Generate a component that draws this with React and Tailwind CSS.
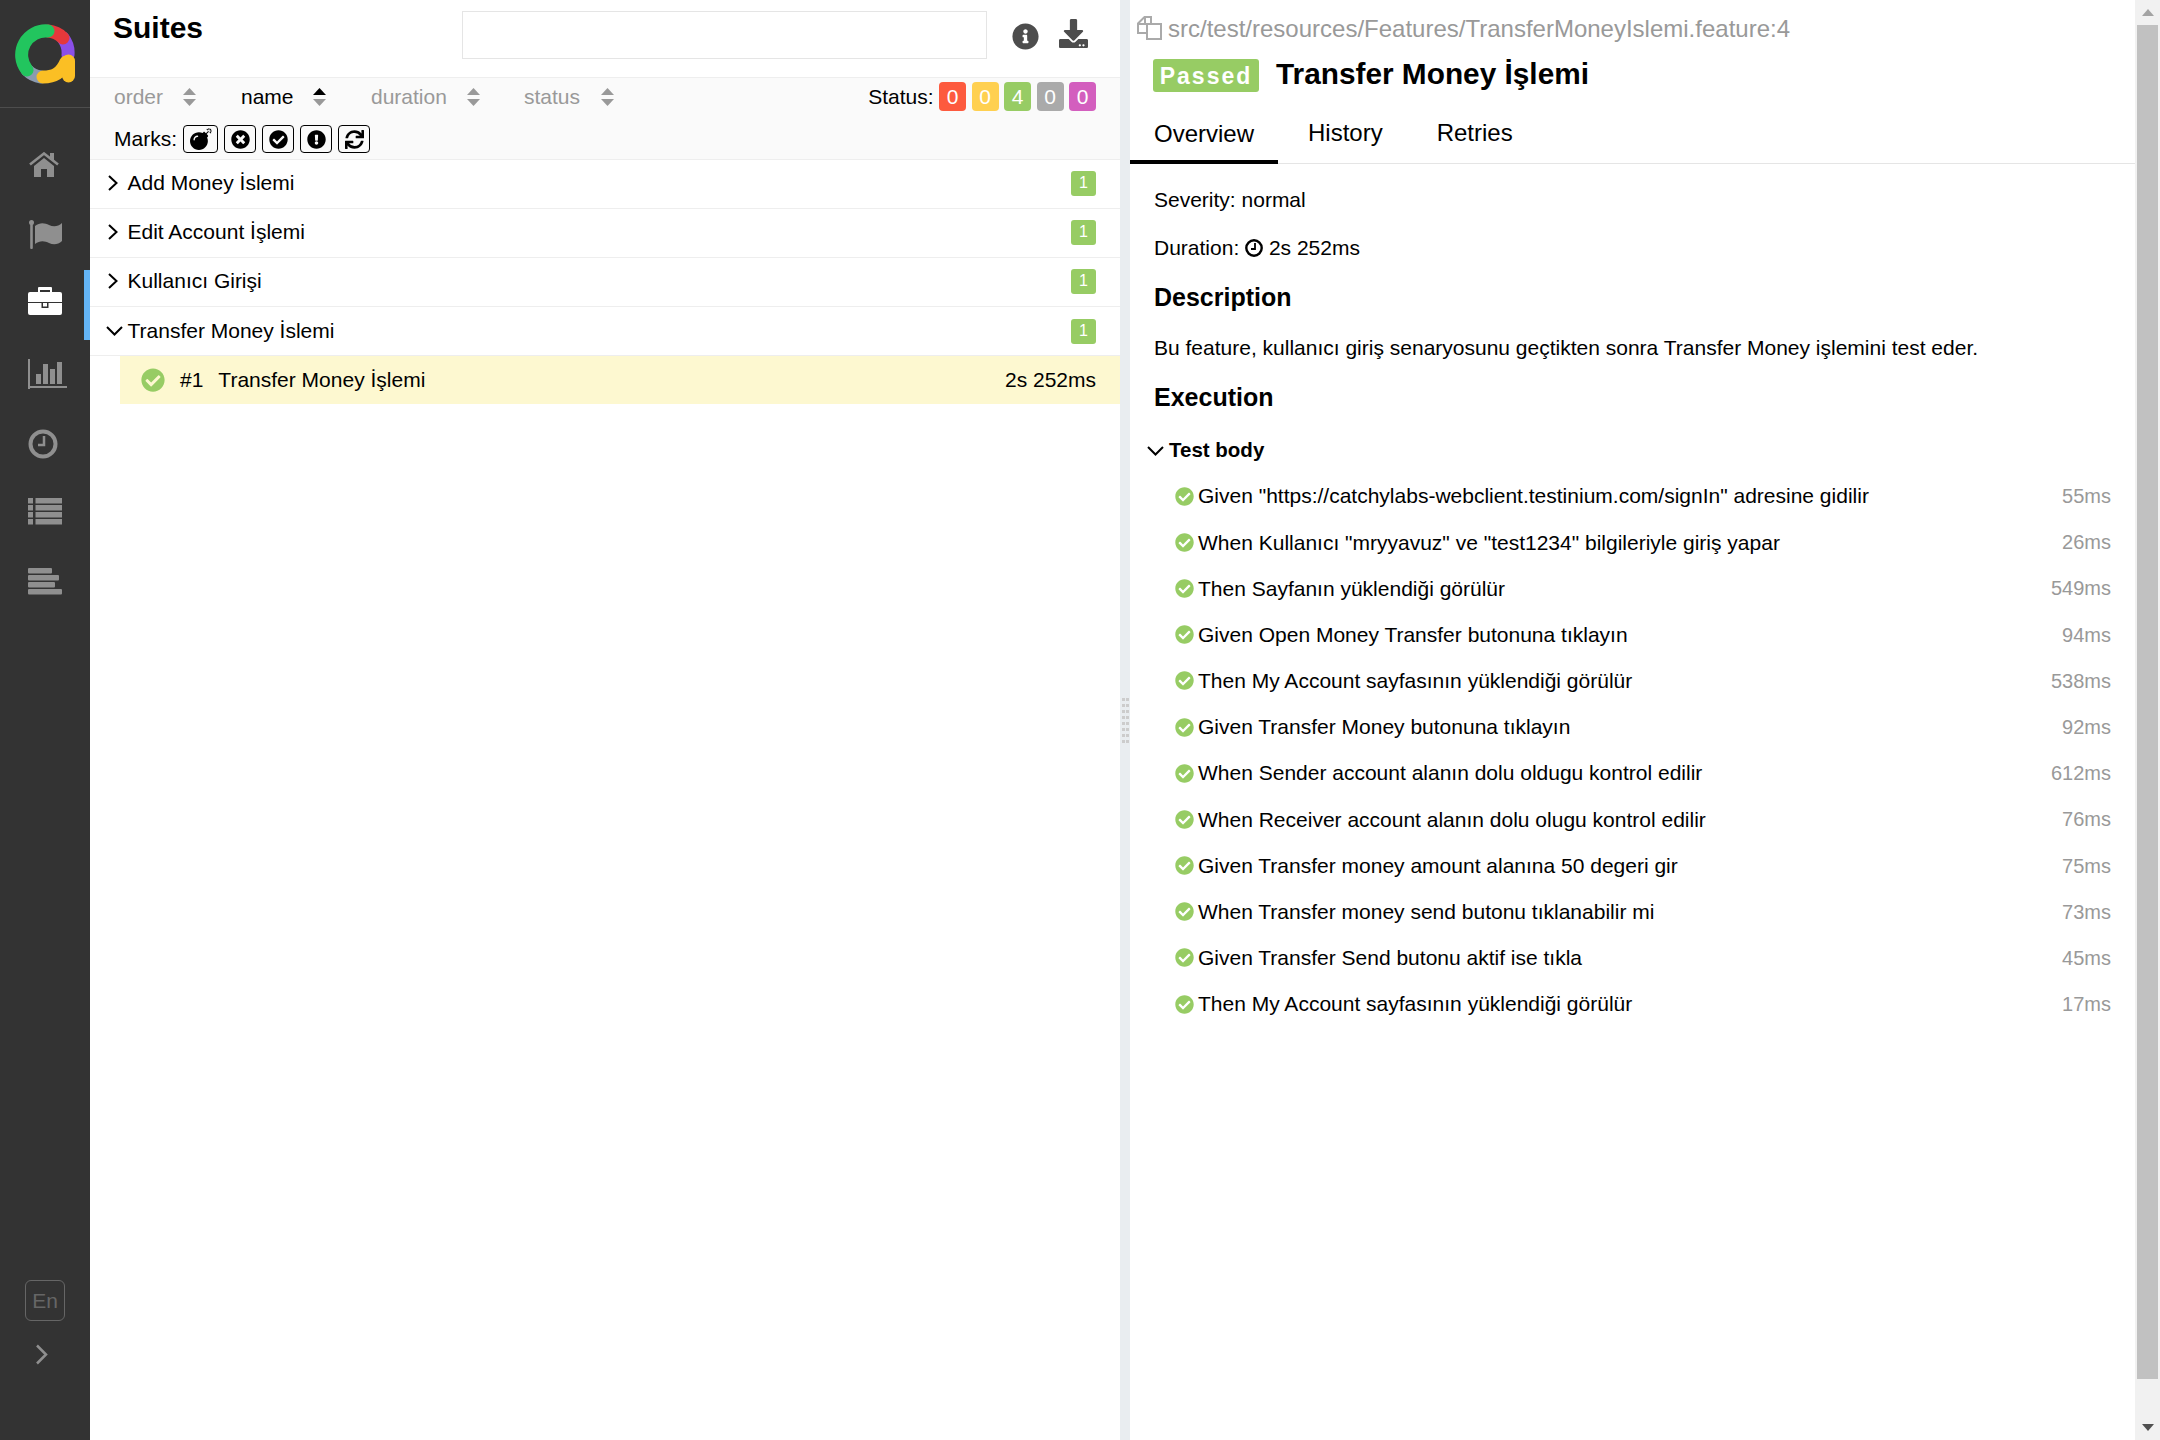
import React from "react";
import {
  FaBomb,
  FaTimesCircle,
  FaCheckCircle,
  FaExclamationCircle,
  FaSync,
  FaInfoCircle,
  FaDownload,
} from "react-icons/fa";

const suites = ["Add Money İslemi", "Edit Account İşlemi", "Kullanıcı Girişi"];

const steps = [
  ['Given "https://catchylabs-webclient.testinium.com/signIn" adresine gidilir', "55ms"],
  ['When Kullanıcı "mryyavuz" ve "test1234" bilgileriyle giriş yapar', "26ms"],
  ["Then Sayfanın yüklendiği görülür", "549ms"],
  ["Given Open Money Transfer butonuna tıklayın", "94ms"],
  ["Then My Account sayfasının yüklendiği görülür", "538ms"],
  ["Given Transfer Money butonuna tıklayın", "92ms"],
  ["When Sender account alanın dolu oldugu kontrol edilir", "612ms"],
  ["When Receiver account alanın dolu olugu kontrol edilir", "76ms"],
  ["Given Transfer money amount alanına 50 degeri gir", "75ms"],
  ["When Transfer money send butonu tıklanabilir mi", "73ms"],
  ["Given Transfer Send butonu aktif ise tıkla", "45ms"],
  ["Then My Account sayfasının yüklendiği görülür", "17ms"],
];

function Logo() {
  return (
    <svg width="60" height="60" viewBox="0 0 60 60" fill="none" strokeWidth="13" strokeLinecap="round">
      <path d="M12 46 A24 24 0 0 0 26 53" stroke="#8b9bb0" />
      <path d="M48 14 A24 24 0 0 1 53 31" stroke="#8b4fe8" />
      <path d="M33 7 A24 24 0 0 1 48 14" stroke="#e5383b" />
      <path d="M12 46 A24 24 0 0 1 33 7" stroke="#22c55e" />
      <path d="M28 53 C38 53 46 50 51 38" stroke="#fbbf24" />
      <path d="M53.5 37 V52" stroke="#fbbf24" />
    </svg>
  );
}

function HomeIcon() {
  return (
    <svg width="30" height="25" viewBox="0 0 30 25" fill="#8f8f8f" className="ml-[1px]">
      <rect x="21" y="1" width="4" height="7" />
      <path d="M1 12.5 L15 1.5 L29 12.5" fill="none" stroke="#8f8f8f" strokeWidth="2.6" />
      <path d="M5 14 L15 6 L25 14 V25 H18 V17 H12 V25 H5 Z" />
    </svg>
  );
}

function FlagIcon() {
  return (
    <svg width="33" height="29" viewBox="0 0 33 29" fill="#8f8f8f" className="ml-[1px]">
      <circle cx="2.5" cy="2.5" r="2.5" />
      <rect x="1.2" y="3" width="2.6" height="26" rx="1" />
      <path d="M6 6 C11 2 16 3 20 5 C24 7 29 7 33 3 V21 C29 25 24 25 20 23 C16 21 11 20 6 24 Z" />
    </svg>
  );
}

function BriefcaseIcon() {
  return (
    <svg width="34" height="28" viewBox="0 0 34 28">
      <path fillRule="evenodd" d="M11 0 H23 a1 1 0 0 1 1 1 V6 H22 V3 H12 V6 H10 V1 a1 1 0 0 1 1 -1 Z" fill="#fff" />
      <rect x="0" y="5" width="34" height="23" rx="2" fill="#fff" />
      <rect x="0" y="15" width="34" height="1" fill="#333" />
      <rect x="13.5" y="15" width="7" height="6" fill="#333" />
      <rect x="15" y="16" width="4" height="3.5" fill="#fff" />
    </svg>
  );
}

function ChartIcon() {
  return (
    <svg width="39" height="30" viewBox="0 0 39 30" fill="#8f8f8f">
      <rect x="0" y="0" width="2" height="30" />
      <rect x="0" y="27" width="39" height="2" />
      <rect x="8" y="15" width="5" height="10" />
      <rect x="15" y="5" width="5" height="20" />
      <rect x="22" y="10" width="5" height="15" />
      <rect x="29" y="3" width="5" height="22" />
    </svg>
  );
}

function ClockIcon() {
  return (
    <svg width="30" height="30" viewBox="0 0 30 30" fill="none" stroke="#8f8f8f">
      <circle cx="15" cy="15" r="12.5" strokeWidth="4" />
      <path d="M16 7 V16 H10" strokeWidth="2.5" />
    </svg>
  );
}

function ListIcon() {
  return (
    <svg width="34" height="27" viewBox="0 0 34 27" fill="#8f8f8f">
      {[0, 7, 14, 21].map((y) => (
        <g key={y}>
          <rect x="0" y={y} width="5" height="5.5" />
          <rect x="7.5" y={y} width="26.5" height="5.5" />
        </g>
      ))}
    </svg>
  );
}

function AlignIcon() {
  return (
    <svg width="34" height="27" viewBox="0 0 34 27" fill="#8f8f8f">
      <rect x="0" y="0" width="24" height="5.5" rx="1" />
      <rect x="0" y="7" width="31" height="5.5" rx="1" />
      <rect x="0" y="14" width="27" height="5.5" rx="1" />
      <rect x="0" y="21" width="34" height="5.5" rx="1" />
    </svg>
  );
}

function CopyIcon() {
  return (
    <svg width="25" height="24" viewBox="0 0 25 24" fill="none" stroke="#aaa" strokeWidth="2" className="mr-[6px] -mt-[2px]">
      <path d="M9 17 H1 V7.5 L7.5 1 H14 V7" />
      <path d="M8 1.5 V8 H1.5" />
      <path d="M10 8 H24 V23 H10 Z" />
    </svg>
  );
}

function SmallClock() {
  return (
    <svg width="18" height="18" viewBox="0 0 18 18" fill="none" stroke="#000">
      <circle cx="9" cy="9" r="7.7" strokeWidth="2.4" />
      <path d="M10 4 V10 H6" strokeWidth="1.8" />
    </svg>
  );
}

function NavItem({ active, pb, children }) {
  return (
    <div className={`h-[70px] flex items-center pl-[28px] border-r-[6px] ${pb} ${active ? "border-[#64b5f6]" : "border-transparent"}`}>
      {children}
    </div>
  );
}

function Sort({ active }) {
  return (
    <svg width="13" height="18" viewBox="0 0 13 18" className="shrink-0">
      <path d="M6.5 0 L13 7 H0 Z" fill={active ? "#000" : "#999"} />
      <path d="M0 11 H13 L6.5 18 Z" fill="#999" />
    </svg>
  );
}

function Chevron({ open, size = 2 }) {
  return open ? (
    <svg width="17" height="10" viewBox="0 0 17 10" fill="none" stroke="#000" strokeWidth={size}>
      <path d="M1 1 L8.5 8.5 L16 1" />
    </svg>
  ) : (
    <svg width="10" height="16" viewBox="0 0 10 16" fill="none" stroke="#000" strokeWidth={size}>
      <path d="M1 1 L8.5 8 L1 15" />
    </svg>
  );
}

function CountBadge() {
  return (
    <span className="w-[25px] h-[25px] rounded-[3px] bg-[#97cc64] text-white text-[16px] flex items-center justify-center">1</span>
  );
}

function StatusBadge({ color, value }) {
  return (
    <span className={`w-[27px] h-[29px] rounded-[4px] text-white text-[21px] flex items-center justify-center ${color}`}>{value}</span>
  );
}

function Mark({ w, size = 19, children }) {
  return (
    <span className={`h-[28px] border border-black rounded-[4px] flex items-center justify-center ${w} ${size === 22 ? "text-[22px]" : "text-[19px]"}`}>{children}</span>
  );
}

export default function App() {
  return (
    <div className="flex h-[1440px] overflow-hidden bg-white text-black text-[21px] font-['Liberation_Sans',Arial,sans-serif]">
      {/* side nav */}
      <aside className="w-[90px] shrink-0 bg-[#333] flex flex-col">
        <div className="h-[108px] border-b border-[#4d4d4d] pt-[24px] pl-[15px]">
          <Logo />
        </div>
        <div className="pt-[22px]">
          <NavItem pb="pb-[2px]"><HomeIcon /></NavItem>
          <NavItem pb="pb-[2px]"><FlagIcon /></NavItem>
          <NavItem active pb="pb-[8px]"><BriefcaseIcon /></NavItem>
          <NavItem pb="pb-[3px]"><ChartIcon /></NavItem>
          <NavItem pb="pb-[3px]"><ClockIcon /></NavItem>
          <NavItem pb="pb-[8px]"><ListIcon /></NavItem>
          <NavItem pb="pb-[8px]"><AlignIcon /></NavItem>
        </div>
        <div className="mt-auto pb-[75px] pl-[25px]">
          <div className="w-[40px] h-[41px] border border-[#666] rounded-[6px] text-[#666] flex items-center justify-center">En</div>
          <svg width="13" height="21" viewBox="0 0 13 21" fill="none" stroke="#8f8f8f" strokeWidth="2.5" className="mt-[23px] ml-[10px]">
            <path d="M2 1.5 L11 10.5 L2 19.5" />
          </svg>
        </div>
      </aside>

      {/* suites pane */}
      <section className="w-[1030px] shrink-0 flex flex-col">
        <div className="h-[78px] border-b border-[#eee] flex items-start">
          <h2 className="pl-[23px] pt-[5px] text-[30px] font-bold w-[372px]">Suites</h2>
          <div className="w-[525px] h-[48px] mt-[11px] border border-[#e5e5e5]"></div>
          <FaInfoCircle size={27} color="#4d4d4d" className="ml-[25px] mt-[23px]" />
          <FaDownload size={29} color="#4d4d4d" className="ml-[20px] mt-[19px]" />
        </div>

        <div className="h-[82px] bg-[#fafafa] border-b border-[#eee] pl-[24px] pr-[24px] pt-[4px]">
          <div className="flex items-center h-[29px] mb-[12px]">
            <div className="w-[127px] flex items-center gap-[20px] text-[#999]">order <Sort /></div>
            <div className="w-[130px] flex items-center gap-[19px]">name <Sort active /></div>
            <div className="w-[153px] flex items-center gap-[20px] text-[#999]">duration <Sort /></div>
            <div className="flex items-center gap-[21px] text-[#999]">status <Sort /></div>
            <div className="ml-auto flex items-center gap-[5.5px]">
              <span>Status:</span>
              <StatusBadge color="bg-[#fd5a3e]" value="0" />
              <StatusBadge color="bg-[#ffd050]" value="0" />
              <StatusBadge color="bg-[#97cc64]" value="4" />
              <StatusBadge color="bg-[#aaa]" value="0" />
              <StatusBadge color="bg-[#d35ebe]" value="0" />
            </div>
          </div>
          <div className="flex items-center gap-[6px] h-[32px]">
            <span>Marks:</span>
            <Mark w="w-[35px]" size={22}><FaBomb /></Mark>
            <Mark w="w-[32px]"><FaTimesCircle /></Mark>
            <Mark w="w-[32px]"><FaCheckCircle /></Mark>
            <Mark w="w-[32px]"><FaExclamationCircle /></Mark>
            <Mark w="w-[32px]"><FaSync /></Mark>
          </div>
        </div>

        {suites.map((name) => (
          <div key={name} className="h-[49px] border-b border-[#eee] flex items-center pl-[18px] pr-[24px] pb-[2px]">
            <span className="w-[19.5px] flex"><Chevron /></span>
            <span>{name}</span>
            <span className="ml-auto"><CountBadge /></span>
          </div>
        ))}
        <div className="h-[49px] flex items-center pl-[16px] pr-[24px] border-b border-[#eee]">
          <span className="w-[21.5px] flex"><Chevron open /></span>
          <span>Transfer Money İslemi</span>
          <span className="ml-auto"><CountBadge /></span>
        </div>
        <div className="ml-[30px] h-[48px] bg-[#fdf8d0] flex items-center pl-[21px] pr-[24px]">
          <FaCheckCircle size={24} color="#97cc64" />
          <span className="ml-[15px]">#1</span>
          <span className="ml-[15px]">Transfer Money İşlemi</span>
          <span className="ml-auto">2s 252ms</span>
        </div>
      </section>

      {/* resize gutter */}
      <div className="w-[10px] shrink-0 bg-[#e9edf0] flex flex-col items-center justify-center gap-[3px]">
        {[0, 1, 2, 3, 4, 5, 6, 7].map((i) => (
          <div key={i} className="flex gap-[1px]">
            <span className="w-[3px] h-[3px] bg-[#ccc]"></span>
            <span className="w-[3px] h-[3px] bg-[#ccc]"></span>
          </div>
        ))}
      </div>

      {/* test result pane */}
      <section className="flex-1 min-w-0 flex flex-col">
        <div className="h-[56px] flex items-center pl-[7px] pt-[2px] text-[24px] text-[#999]">
          <CopyIcon />
          <span>src/test/resources/Features/TransferMoneyIslemi.feature:4</span>
        </div>
        <div className="flex items-center pl-[23px] h-[38px]">
          <span className="w-[106px] h-[33px] rounded-[3px] bg-[#97cc64] text-white font-bold text-[23px] tracking-[2px] flex items-center justify-center pt-[2px]">Passed</span>
          <h2 className="ml-[17px] pb-[1px] text-[29.8px] font-bold">Transfer Money İşlemi</h2>
        </div>
        <div className="h-[70px] border-b border-[#e5e5e5] flex items-end text-[24px]">
          <div className="w-[148px] h-[48px] border-b-[4px] border-black pl-[24px] -mb-[1px]">Overview</div>
          <div className="h-[48px] pl-[30px]">History</div>
          <div className="h-[48px] pl-[54px]">Retries</div>
        </div>

        <div className="pl-[24px] pr-[24px]">
          <div className="h-[48px] mt-[12px] flex items-center">Severity: normal</div>
          <div className="h-[48px] flex items-center">Duration:&nbsp;<SmallClock />&nbsp;2s 252ms</div>
          <h3 className="h-[52px] flex items-center text-[25px] font-bold">Description</h3>
          <div className="h-[48px] flex items-center">Bu feature, kullanıcı giriş senaryosunu geçtikten sonra Transfer Money işlemini test eder.</div>
          <h3 className="h-[52px] flex items-center text-[25px] font-bold">Execution</h3>
          <div className="h-[45px] mt-[4px] flex items-center font-bold text-[20.5px] -ml-[7px]">
            <span className="w-[22px] flex"><Chevron open /></span>
            Test body
          </div>
          {steps.map(([text, time], i) => (
            <div key={i} className="h-[46.2px] flex items-center pl-[21px]">
              <FaCheckCircle size={19} color="#97cc64" className="shrink-0" />
              <span className="ml-[4px]">{text}</span>
              <span className="ml-auto text-[#999] text-[20px]">{time}</span>
            </div>
          ))}
        </div>
      </section>

      {/* scrollbar */}
      <div className="w-[25px] shrink-0 bg-[#f1f1f1] flex flex-col items-center">
        <div className="h-[25px] flex items-center justify-center">
          <svg width="12" height="7" viewBox="0 0 12 7" fill="#a3a3a3"><path d="M6 0 L12 7 H0 Z" /></svg>
        </div>
        <div className="w-[21px] h-[1354px] bg-[#c1c1c1]"></div>
        <div className="mt-auto h-[25px] flex items-center justify-center">
          <svg width="12" height="7" viewBox="0 0 12 7" fill="#505050"><path d="M0 0 H12 L6 7 Z" /></svg>
        </div>
      </div>
    </div>
  );
}
